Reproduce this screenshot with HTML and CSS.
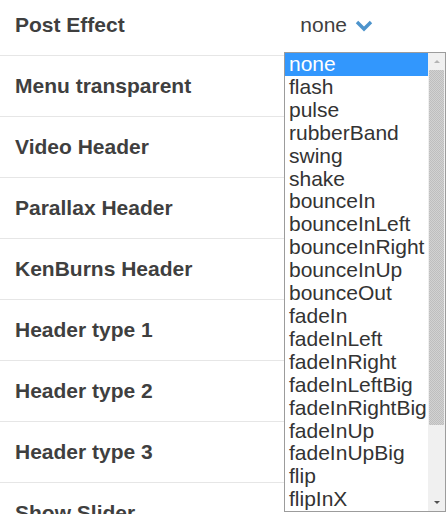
FILE: index.html
```html
<!DOCTYPE html>
<html lang="en">
<head>
    <meta charset="UTF-8">
    <meta name="viewport" content="width=device-width, initial-scale=1.0">
    <title>Theme Options</title>
    <link rel="stylesheet" href="styles.css">
</head>
<body>
    <div class="options">
        <div class="option">
            <span class="label">Post Effect</span>
            <div class="picker">
                <span class="picker-value">none</span>
                <svg class="chevron" width="18" height="12" viewBox="0 0 18 12">
                    <path d="M2 2 L9 9 L16 2" fill="none" stroke="#4d94cc" stroke-width="3.4"/>
                </svg>
            </div>
        </div>
        <div class="option"><span class="label">Menu transparent</span></div>
        <div class="option"><span class="label">Video Header</span></div>
        <div class="option"><span class="label">Parallax Header</span></div>
        <div class="option"><span class="label">KenBurns Header</span></div>
        <div class="option"><span class="label">Header type 1</span></div>
        <div class="option"><span class="label">Header type 2</span></div>
        <div class="option"><span class="label">Header type 3</span></div>
        <div class="option"><span class="label">Show Slider</span></div>
    </div>

    <!-- open listbox of the Post Effect picker -->
    <div class="listbox">
        <ul class="items">
            <li class="selected">none</li>
            <li>flash</li>
            <li>pulse</li>
            <li>rubberBand</li>
            <li>swing</li>
            <li>shake</li>
            <li>bounceIn</li>
            <li>bounceInLeft</li>
            <li>bounceInRight</li>
            <li>bounceInUp</li>
            <li>bounceOut</li>
            <li>fadeIn</li>
            <li>fadeInLeft</li>
            <li>fadeInRight</li>
            <li>fadeInLeftBig</li>
            <li>fadeInRightBig</li>
            <li>fadeInUp</li>
            <li>fadeInUpBig</li>
            <li>flip</li>
            <li>flipInX</li>
        </ul>
        <div class="scrollbar">
            <div class="arrow arrow-up"></div>
            <div class="thumb"></div>
            <div class="track"></div>
            <div class="arrow arrow-down"></div>
        </div>
    </div>
</body>
</html>
```

FILE: styles.css
```css
:root {
    --text-color: #3f3f3f;
    --line-color: #e6e6e6;
    --select-blue: #3297fd;
}

* {
    margin: 0;
    padding: 0;
    box-sizing: border-box;
}

body {
    font-family: 'Liberation Sans', Arial, sans-serif;
    color: var(--text-color);
    background: #fff;
    overflow: hidden;
}

.options {
    margin-top: -5px;
}

.option {
    display: flex;
    align-items: center;
    height: 61px;
    padding: 0 15px;
    border-bottom: 1px solid var(--line-color);
}

.label {
    font-size: 21px;
    font-weight: bold;
}

.picker {
    display: flex;
    align-items: center;
    gap: 8px;
    margin-left: auto;
    margin-right: 58px;
}

.picker-value {
    font-size: 21px;
}

.chevron {
    margin-top: 1px;
}

.listbox {
    position: absolute;
    left: 284px;
    top: 52px;
    width: 162px;
    height: 460px;
    display: flex;
    background: #fff;
    border: 1px solid #9c9c9c;
}

.items {
    flex: 1;
    list-style: none;
    overflow: hidden;
}

.items li {
    font-size: 21px;
    line-height: 22.9px;
    padding-left: 4px;
    color: #333;
    white-space: nowrap;
}

.items li.selected {
    background: var(--select-blue);
    color: #fff;
}

.scrollbar {
    width: 17px;
    display: flex;
    flex-direction: column;
    background: #f0f0f0;
}

.arrow {
    height: 17px;
    display: flex;
    align-items: center;
    justify-content: center;
}

.arrow::before {
    content: "";
    border-left: 3px solid transparent;
    border-right: 3px solid transparent;
}

.arrow-up::before {
    border-bottom: 3px solid #b4b4b4;
}

.arrow-down::before {
    border-top: 3px solid #505050;
}

.thumb {
    height: 355px;
    margin: 0 1px;
    background: repeating-conic-gradient(#bebebe 0 25%, #d2d2d2 0 50%) 0 0 / 2px 2px;
}

.track {
    flex: 1;
}
```
